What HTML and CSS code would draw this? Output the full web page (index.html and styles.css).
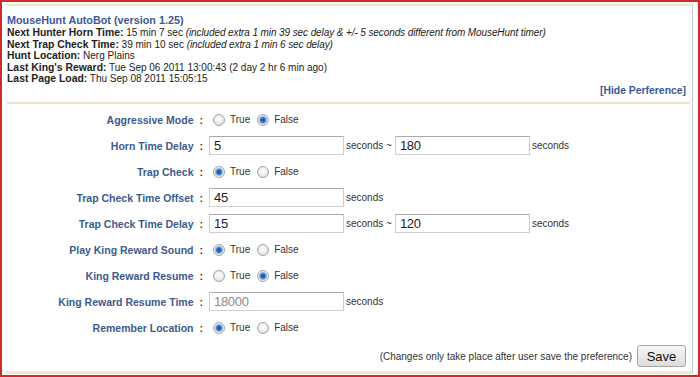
FILE: index.html
```html
<!DOCTYPE html>
<html lang="en">
<head>
  <meta charset="UTF-8">
  <title>MouseHunt AutoBot</title>
  <link rel="stylesheet" href="styles.css">
</head>
<body>
  <div class="frame">
    <div class="panel">
      <div class="status">
        <div class="title">MouseHunt AutoBot (version 1.25)</div>
        <div><b>Next Hunter Horn Time:</b> 15 min 7 sec <i>(included extra 1 min 39 sec delay &amp; +/- 5 seconds different from MouseHunt timer)</i></div>
        <div><b>Next Trap Check Time:</b> 39 min 10 sec <i>(included extra 1 min 6 sec delay)</i></div>
        <div><b>Hunt Location:</b> Nerg Plains</div>
        <div><b>Last King's Reward:</b> Tue Sep 06 2011 13:00:43 (2 day 2 hr 6 min ago)</div>
        <div><b>Last Page Load:</b> Thu Sep 08 2011 15:05:15</div>
      </div>
      <div class="toggle"><a href="#">[Hide Perference]</a></div>

      <div class="prefs">
        <div class="label">Aggressive Mode<span class="colon">:</span></div>
        <div class="field">
          <input type="radio" name="aggressive"><span class="opt">True</span>
          <input type="radio" name="aggressive" checked><span class="opt">False</span>
        </div>

        <div class="label">Horn Time Delay<span class="colon">:</span></div>
        <div class="field">
          <input class="num" type="text" value="5"><span class="unit">seconds ~</span>
          <input class="num" type="text" value="180"><span class="unit">seconds</span>
        </div>

        <div class="label">Trap Check<span class="colon">:</span></div>
        <div class="field">
          <input type="radio" name="trapcheck" checked><span class="opt">True</span>
          <input type="radio" name="trapcheck"><span class="opt">False</span>
        </div>

        <div class="label">Trap Check Time Offset<span class="colon">:</span></div>
        <div class="field">
          <input class="num" type="text" value="45"><span class="unit">seconds</span>
        </div>

        <div class="label">Trap Check Time Delay<span class="colon">:</span></div>
        <div class="field">
          <input class="num" type="text" value="15"><span class="unit">seconds ~</span>
          <input class="num" type="text" value="120"><span class="unit">seconds</span>
        </div>

        <div class="label">Play King Reward Sound<span class="colon">:</span></div>
        <div class="field">
          <input type="radio" name="krsound" checked><span class="opt">True</span>
          <input type="radio" name="krsound"><span class="opt">False</span>
        </div>

        <div class="label">King Reward Resume<span class="colon">:</span></div>
        <div class="field">
          <input type="radio" name="krresume"><span class="opt">True</span>
          <input type="radio" name="krresume" checked><span class="opt">False</span>
        </div>

        <div class="label">King Reward Resume Time<span class="colon">:</span></div>
        <div class="field">
          <input class="num" type="text" value="18000" disabled><span class="unit">seconds</span>
        </div>

        <div class="label">Remember Location<span class="colon">:</span></div>
        <div class="field">
          <input type="radio" name="remember" checked><span class="opt">True</span>
          <input type="radio" name="remember"><span class="opt">False</span>
        </div>
      </div>

      <div class="save-row">
        <span class="note">(Changes only take place after user save the preference)</span>
        <button class="save-button">Save</button>
      </div>
    </div>
  </div>
</body>
</html>
```

FILE: styles.css
```css
* {
  box-sizing: border-box;
}
body {
  margin: 0;
  background-color: #fff;
  font-family: 'Liberation Sans', Arial, sans-serif;
  font-size: 10px;
  color: #222;
}
.frame {
  height: 377px;
  border: 2px solid #cf2b2b;
  padding: 2px 5px 1px 3px;
}
.panel {
  height: 100%;
  display: flex;
  flex-direction: column;
  border-top: 2px solid #f1e6c8;
  border-bottom: 3px solid #efe8d2;
  border-right: 1px solid #c8c8c8;
  padding-left: 2px;
}
.status {
  padding-top: 8px;
  line-height: 11.5px;
}
.status b {
  font-size: 10.4px;
}
.status i {
  letter-spacing: -0.1px;
}
.title {
  font-size: 10.8px;
  font-weight: bold;
  line-height: 13px;
  color: #3b5998;
}
.toggle {
  text-align: right;
  line-height: 12px;
  padding-right: 6px;
}
.toggle a {
  color: #3b5998;
  font-weight: bold;
  font-size: 10.4px;
  text-decoration: none;
}
.prefs {
  display: grid;
  grid-template-columns: 196px 1fr;
  grid-auto-rows: 26px;
  column-gap: 6px;
  align-items: center;
  margin-top: 5px;
  margin-right: 2px;
  padding-top: 3px;
  border-top: 2px solid #f0e4c4;
}
.label {
  text-align: right;
  font-size: 10.5px;
  font-weight: bold;
  color: #3d5a8e;
}
.colon {
  margin-left: 6px;
  color: #333;
}
.field {
  display: flex;
  align-items: center;
}
.field input[type="radio"] {
  appearance: none;
  width: 12px;
  height: 12px;
  margin: 0 5px 0 4px;
  border: 1px solid #a3a3a3;
  border-radius: 50%;
  background: radial-gradient(circle at 50% 40%, #fff 0, #f2f2f2 40%, #d6d6d6 100%);
}
.field input[type="radio"]:checked {
  background: radial-gradient(circle, #1d4f94 0, #2e6cb8 2px, #8fb6e0 3.5px, #eef2f6 4.5px, #d6d6d6 100%);
}
.opt {
  margin-right: 3px;
  color: #333;
}
.num {
  width: 135px;
  height: 19px;
  margin: 0;
  padding: 0 4px;
  border: 1px solid #cfcfcf;
  border-top-color: #ababab;
  font-family: 'Liberation Sans', Arial, sans-serif;
  font-size: 13px;
  letter-spacing: -0.3px;
  color: #222;
  background-color: #fff;
}
.num:disabled {
  color: #8c8c8c;
}
.unit {
  margin: 0 3px 0 2px;
  color: #333;
}
.save-row {
  display: flex;
  justify-content: flex-end;
  align-items: center;
  gap: 5px;
  margin-top: auto;
  padding: 0 6px 4px 0;
}
.note {
  color: #333;
}
.save-button {
  width: 49px;
  height: 22px;
  padding: 0;
  border: 1px solid #a6a6a6;
  border-radius: 3px;
  background: linear-gradient(#f7f7f7, #dcdcdc);
  font-family: 'Liberation Sans', Arial, sans-serif;
  font-size: 13px;
  color: #111;
}
```
